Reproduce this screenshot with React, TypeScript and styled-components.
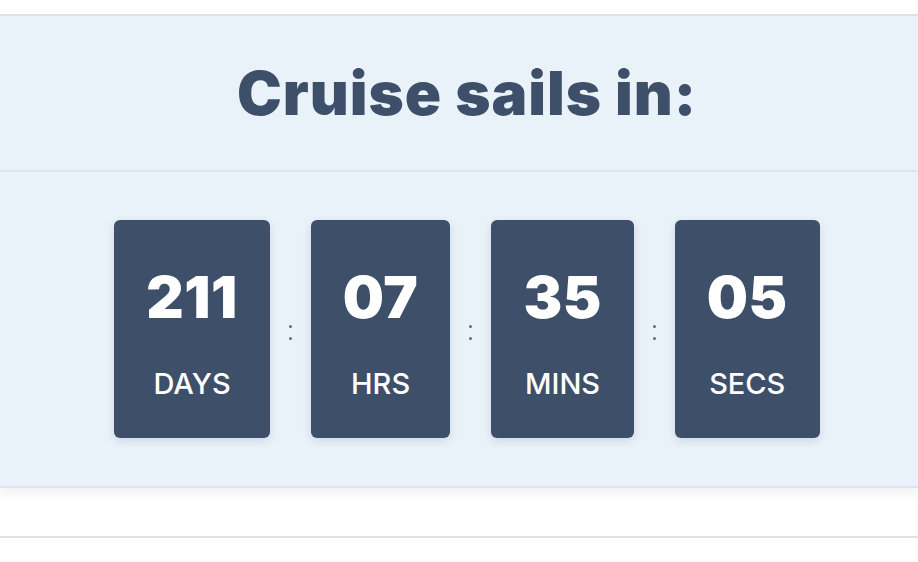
import React from "react";
import styled, { createGlobalStyle } from "styled-components";

const GlobalStyle = createGlobalStyle`
  html, body {
    margin: 0;
    padding: 0;
    background: #ffffff;
  }
  body {
    font-family: Inter, "Noto Sans", sans-serif;
    overflow: hidden;
  }
`;

const Page = styled.div`
  padding-top: 14px;
`;

const Section = styled.section`
  background: #e9f1f9;
  border-top: 2px solid #dee3ea;
  border-bottom: 2px solid #dee3ea;
  box-shadow: 0 6px 10px rgba(30, 40, 60, 0.06);
`;

const Header = styled.div`
  height: 154px;
  display: flex;
  align-items: center;
  justify-content: center;
  padding-left: 16px;
  border-bottom: 2px solid #dce3eb;
`;

const Title = styled.h1`
  margin: 0;
  font-family: Inter, sans-serif;
  font-weight: 900;
  font-size: 60px;
  line-height: 1;
  color: #3e5069;
  letter-spacing: 1px;
`;

const Row = styled.div`
  display: flex;
  align-items: center;
  justify-content: center;
  padding: 48px 0 48px 16px;
`;

const Card = styled.div`
  background: #3e5069;
  border-radius: 6px;
  padding: 48px 32px 40px;
  display: flex;
  flex-direction: column;
  align-items: center;
  box-shadow: 0 3px 8px rgba(30, 45, 70, 0.12);
`;

const Value = styled.div`
  font-family: Inter, sans-serif;
  font-weight: 900;
  font-size: 58px;
  line-height: 1;
  color: #ffffff;
  letter-spacing: 0.5px;
`;

const Label = styled.div`
  margin-top: 43px;
  font-family: Inter, sans-serif;
  font-weight: 500;
  font-size: 29px;
  line-height: 1;
  color: #ffffff;
`;

const Separator = styled.div`
  width: 41px;
  display: flex;
  flex-direction: column;
  align-items: center;
  gap: 9px;
  padding-top: 6px;
`;

const Dot = styled.span`
  width: 3px;
  height: 3px;
  border-radius: 50%;
  background: #5c6e86;
`;

const FooterLine = styled.div`
  margin-top: 48px;
  border-top: 2px solid #dee3ea;
`;

const units = [
  { value: "211", label: "DAYS" },
  { value: "07", label: "HRS" },
  { value: "35", label: "MINS" },
  { value: "05", label: "SECS" },
];

export default function App() {
  return (
    <Page>
      <GlobalStyle />
      <Section>
        <Header>
          <Title>Cruise sails in:</Title>
        </Header>
        <Row>
          {units.map((u, i) => (
            <React.Fragment key={u.label}>
              {i > 0 && (
                <Separator>
                  <Dot />
                  <Dot />
                </Separator>
              )}
              <Card>
                <Value>{u.value}</Value>
                <Label>{u.label}</Label>
              </Card>
            </React.Fragment>
          ))}
        </Row>
      </Section>
      <FooterLine />
    </Page>
  );
}
